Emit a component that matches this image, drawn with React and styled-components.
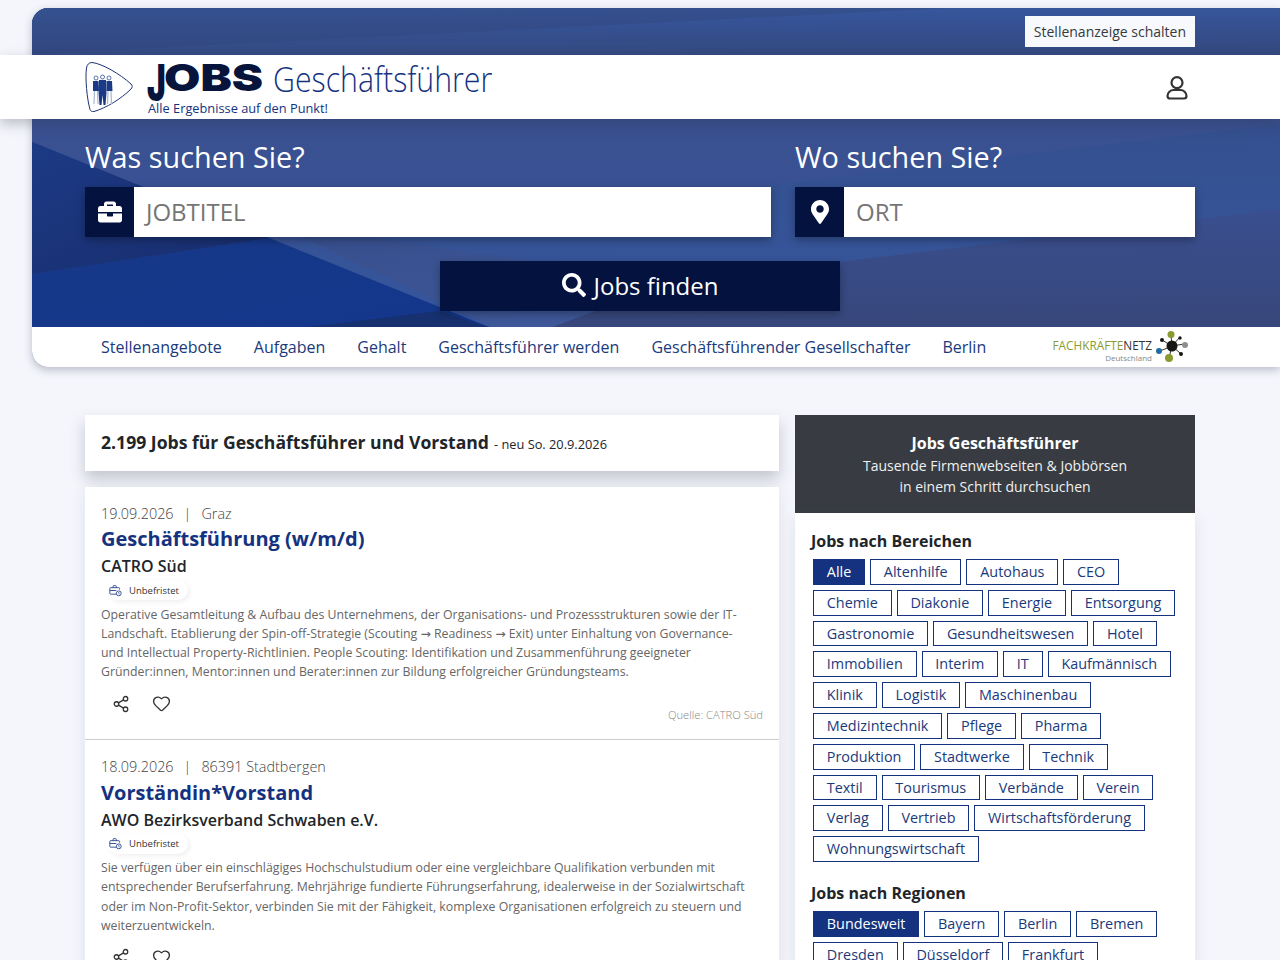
import React from "react";
import styled, { createGlobalStyle } from "styled-components";
import { FaBriefcase, FaMapMarkerAlt, FaSearch } from "react-icons/fa";
import { Share2, Heart } from "lucide-react";

const GlobalStyle = createGlobalStyle`
  html, body {
    margin: 0;
    padding: 0;
    background: #f5f6fc;
    font-family: "Open Sans", "DejaVu Sans", sans-serif;
  }
  * { box-sizing: border-box; }
`;

const Page = styled.div`
  width: 1280px;
  height: 960px;
  overflow: hidden;
  padding-top: 8px;
`;

const Hero = styled.div`
  position: relative;
  margin-left: 32px;
  border-radius: 16px 0 0 16px;
  background: #3a5290;
  box-shadow: 0 3px 8px rgba(30, 40, 70, 0.28);
`;

const HeroArt = styled.svg`
  position: absolute;
  left: 0;
  top: 0;
  width: 1248px;
  height: 319px;
  border-radius: 16px 0 0 0;
`;

const TopBar = styled.div`
  position: relative;
  height: 47px;
  padding: 8px 85px 0 0;
  display: flex;
  justify-content: flex-end;
  align-items: flex-start;
`;

const PostButton = styled.a`
  height: 31px;
  padding: 0 9px;
  background: #f8f9fc;
  color: #343a40;
  font-size: 14px;
  line-height: 31px;
`;

const Header = styled.header`
  position: relative;
  margin-left: -32px;
  height: 64px;
  padding: 0 85px;
  background: #fff;
  box-shadow: 0 5px 12px rgba(40, 45, 60, 0.28);
  display: flex;
  align-items: center;
  justify-content: space-between;
`;

const Brand = styled.div`
  align-self: flex-start;
  padding-top: 1px;
  display: flex;
  align-items: flex-start;
  gap: 14px;
`;

const LogoSvg = styled.svg`
  margin-top: 6px;
`;

const BrandWords = styled.div`
  display: flex;
  flex-direction: column;
  width: 380px;
`;

const BrandLine = styled.div`
  display: flex;
  align-items: baseline;
  height: 46px;
  margin-top: -2px;
`;

const BrandJ = styled.span`
  display: inline-block;
  flex: none;
  width: 17px;
  font-family: "Inter", sans-serif;
  font-weight: 900;
  font-size: 37px;
  line-height: 46px;
  color: #07143c;
  transform: translateY(1px) scale(0.85, 1.33);
  transform-origin: 0 10px;
`;

const BrandJobs = styled.span`
  display: inline-block;
  flex: none;
  width: 109px;
  font-family: "Inter", sans-serif;
  font-weight: 900;
  font-size: 37px;
  line-height: 46px;
  color: #07143c;
  transform: translateY(1px) scaleX(1.27);
  transform-origin: left;
`;

const BrandRole = styled.span`
  display: inline-block;
  flex: none;
  font-family: "Open Sans", sans-serif;
  font-weight: 300;
  font-size: 35px;
  line-height: 46px;
  color: #14327f;
  transform: translateY(2px) scaleX(0.865);
  transform-origin: left;
  white-space: nowrap;
`;

const BrandClaim = styled.div`
  margin-left: 1px;
  font-size: 12.8px;
  line-height: 16px;
  color: #14327f;
`;

const UserIcon = styled.svg`
  width: 24px;
  height: 26px;
  margin: 2px 6px 0 0;
  color: #333;
`;

const Search = styled.section`
  position: relative;
  height: 208px;
  padding: 0 85px 0 53px;
`;

const SearchGrid = styled.div`
  display: grid;
  grid-template-columns: 686px 400px;
  column-gap: 24px;
`;

const SearchLabel = styled.label`
  display: block;
  height: 68px;
  padding-top: 17px;
  color: #fff;
  font-size: 28.8px;
  line-height: 42px;
`;

const SearchField = styled.div`
  display: flex;
  height: 50px;
  background: #fff;
  box-shadow: 0 3px 8px rgba(0, 0, 0, 0.3);
`;

const FieldIcon = styled.div`
  width: 49px;
  background: #04123f;
  color: #fff;
  font-size: 24px;
  display: flex;
  align-items: center;
  justify-content: center;
`;

const FieldText = styled.div`
  padding-left: 12px;
  color: #757575;
  font-size: 24px;
  line-height: 50px;
`;

const FindButton = styled.button`
  display: flex;
  align-items: center;
  justify-content: center;
  gap: 8px;
  width: 400px;
  height: 50px;
  margin: 24px auto 0;
  padding: 0 0 2px;
  border: 0;
  background: #04123f;
  color: #fff;
  font-family: inherit;
  font-size: 24px;
  box-shadow: 0 3px 8px rgba(0, 0, 0, 0.3);
`;

const Nav = styled.nav`
  position: relative;
  height: 40px;
  padding: 0 91px 0 69px;
  background: #fff;
  border-radius: 0 0 0 16px;
  display: flex;
  align-items: center;
  gap: 32px;
`;

const NavLink = styled.a`
  color: #1a3a7c;
  font-size: 16px;
`;

const Partner = styled.div`
  margin-left: auto;
  display: flex;
  align-items: center;
  gap: 3px;
`;

const PartnerWords = styled.div`
  padding-top: 7px;
  display: flex;
  flex-direction: column;
  align-items: flex-end;
  font-size: 11.8px;
  line-height: 13px;
  color: #8a9a2e;
`;

const PartnerDark = styled.span`
  color: #333;
`;

const PartnerSub = styled.span`
  margin-top: 1px;
  font-size: 8px;
  line-height: 9px;
  color: #888;
`;

const Columns = styled.main`
  display: grid;
  grid-template-columns: 694px 400px;
  column-gap: 16px;
  padding: 48px 85px 0;
  align-items: start;
`;

const ResultBar = styled.div`
  height: 56px;
  padding: 0 16px 2px;
  background: #fff;
  box-shadow: 0 8px 14px rgba(50, 55, 80, 0.25);
  display: flex;
  align-items: center;
  gap: 5px;
  margin-bottom: 15.5px;
`;

const ResultTitle = styled.h1`
  margin: 0;
  font-size: 17.6px;
  font-weight: 700;
  color: #212529;
`;

const ResultNote = styled.span`
  font-size: 12.8px;
  color: #212529;
  padding-top: 3px;
`;

const JobList = styled.div`
  background: #fff;
  box-shadow: 0 4px 14px rgba(60, 70, 100, 0.12);
`;

const Job = styled.article`
  position: relative;
  height: 253.5px;
  padding: 16.1px 16px 0;
  border-bottom: 1px solid #ccc;
`;

const JobMeta = styled.div`
  font-size: 14.4px;
  font-weight: 300;
  line-height: 21.7px;
  color: #444;
  display: flex;
  gap: 10px;
`;

const JobTitle = styled.h2`
  margin: 0;
  font-size: 20px;
  font-weight: 700;
  line-height: 30px;
  color: #14327f;
`;

const JobCompany = styled.div`
  font-size: 16px;
  font-weight: 600;
  line-height: 25px;
  color: #212529;
`;

const JobBadge = styled.div`
  display: inline-flex;
  align-items: center;
  gap: 7px;
  height: 20px;
  margin: 1px 0 0 7px;
  padding: 0 9px 0 1px;
  border-radius: 10px;
  font-size: 9.5px;
  color: #333;
  box-shadow: 2px 2px 4px rgba(60, 70, 100, 0.08);
`;

const BadgeIcon = styled.svg`
  width: 13px;
  height: 13px;
  color: #14327f;
`;

const JobText = styled.p`
  margin: 2.9px 0 0;
  padding-right: 10px;
  font-size: 12.3px;
  line-height: 19.2px;
  color: #666;
`;

const JobActions = styled.div`
  display: flex;
  align-items: center;
  gap: 22px;
  margin: 12.6px 0 0 11px;
  color: #333;
`;

const JobSource = styled.div`
  position: absolute;
  right: 16px;
  bottom: 17px;
  font-size: 11.2px;
  font-weight: 300;
  color: #888;
`;

const SideHead = styled.div`
  height: 98px;
  padding-top: 17px;
  background: #383c42;
  color: #f0f0f0;
  text-align: center;
  font-size: 14px;
  line-height: 21px;
`;

const SideTitle = styled.div`
  font-size: 16px;
  font-weight: 700;
  line-height: 23px;
  color: #fff;
`;

const SidePanel = styled.aside`
  padding: 16px 16px 0;
  background: #fff;
  box-shadow: 0 4px 14px rgba(60, 70, 100, 0.12);
`;

const SideGroup = styled.div`
  margin-bottom: 19px;
`;

const SideHeading = styled.h3`
  margin: 0 0 6px;
  font-size: 16px;
  font-weight: 700;
  line-height: 24px;
  color: #212529;
`;

const TagList = styled.div`
  display: flex;
  flex-wrap: wrap;
  gap: 5px;
  padding: 0 3px 0 2px;
`;

const Tag = styled.a`
  height: 25.8px;
  padding: 0 12.8px;
  border: 1px solid #14327f;
  background: ${(p) => (p.$active ? "#14327f" : "#fff")};
  color: ${(p) => (p.$active ? "#fff" : "#1a3a7c")};
  font-size: 14.4px;
  line-height: 24px;
`;

const areas = [
  "Alle", "Altenhilfe", "Autohaus", "CEO", "Chemie", "Diakonie", "Energie", "Entsorgung",
  "Gastronomie", "Gesundheitswesen", "Hotel", "Immobilien", "Interim", "IT", "Kaufmännisch",
  "Klinik", "Logistik", "Maschinenbau", "Medizintechnik", "Pflege", "Pharma", "Produktion",
  "Stadtwerke", "Technik", "Textil", "Tourismus", "Verbände", "Verein", "Verlag", "Vertrieb",
  "Wirtschaftsförderung", "Wohnungswirtschaft",
];

const regions = ["Bundesweit", "Bayern", "Berlin", "Bremen", "Dresden", "Düsseldorf", "Frankfurt"];

const navItems = [
  "Stellenangebote", "Aufgaben", "Gehalt", "Geschäftsführer werden",
  "Geschäftsführender Gesellschafter", "Berlin",
];

const jobs = [
  {
    date: "19.09.2026",
    place: "Graz",
    title: "Geschäftsführung (w/m/d)",
    company: "CATRO Süd",
    text: "Operative Gesamtleitung & Aufbau des Unternehmens, der Organisations- und Prozessstrukturen sowie der IT-Landschaft. Etablierung der Spin-off-Strategie (Scouting → Readiness → Exit) unter Einhaltung von Governance- und Intellectual Property-Richtlinien. People Scouting: Identifikation und Zusammenführung geeigneter Gründer:innen, Mentor:innen und Berater:innen zur Bildung erfolgreicher Gründungsteams.",
  },
  {
    date: "18.09.2026",
    place: "86391 Stadtbergen",
    title: "Vorständin*Vorstand",
    company: "AWO Bezirksverband Schwaben e.V.",
    text: "Sie verfügen über ein einschlägiges Hochschulstudium oder eine vergleichbare Qualifikation verbunden mit entsprechender Berufserfahrung. Mehrjährige fundierte Führungserfahrung, idealerweise in der Sozialwirtschaft oder im Non-Profit-Sektor, verbinden Sie mit der Fähigkeit, komplexe Organisationen erfolgreich zu steuern und weiterzuentwickeln.",
  },
];

const LogoMark = () => (
  <LogoSvg width="48" height="50" viewBox="0 0 48 50" fill="none">
    <path d="M7 .5C17 1.500 35 12 46 22c1.500 1.500 1.500 3.500 0 5C36 37 21 46 9 49.500c-2 .5-3.500-.5-4-2C2 37 0 16 1.500 6 2 2.500 4 .5 7 .5z" stroke="#1d3272" strokeWidth="1" />
    <g fill="#1d3a86">
      <circle cx="11" cy="16" r="2" fill="#fff" stroke="#1d3a86" strokeWidth=".7" />
      <circle cx="17.500" cy="15" r="2" fill="#fff" stroke="#1d3a86" strokeWidth=".7" />
      <circle cx="24" cy="16" r="2" fill="#fff" stroke="#1d3a86" strokeWidth=".7" />
      <path d="M8 19h5.500l.5 10H8z" />
      <path d="M21.500 19H27l.5 10h-6z" />
      <path d="M14 18h7l.5 13-1 12h-2l-1-10-1 10h-2l-1-12z" />
    </g>
    <path d="M9.500 29l-.5 13M12.500 29l.5 13M23 29l-.5 13M26 29l.5 13" stroke="#a8b6d0" strokeWidth="1.200" />
  </LogoSvg>
);

const PartnerMark = () => (
  <svg width="34" height="34" viewBox="0 0 34 34">
    <g stroke="#333" strokeWidth="1">
      <path d="M17 16L16 5M17 16L7 10M17 16L5 21M17 16L14 28M17 16L29 14M17 16L25 23M17 16L25 7" />
    </g>
    <circle cx="17" cy="16" r="5.500" fill="#151515" />
    <circle cx="16" cy="4.500" r="3.500" fill="#8a9a2e" />
    <circle cx="14" cy="28" r="4" fill="#8a9a2e" />
    <circle cx="4" cy="21" r="3" fill="#1f6ca3" />
    <circle cx="30" cy="15" r="3" fill="#8e8e8e" />
    <circle cx="7" cy="10" r="2" fill="#151515" />
    <circle cx="25" cy="8" r="1.700" fill="#151515" />
    <circle cx="26" cy="24" r="2" fill="#151515" />
  </svg>
);

const BagClock = () => (
  <BadgeIcon viewBox="0 0 16 16" fill="none" stroke="currentColor" strokeWidth="1">
    <path d="M9 12.500H2a1 1 0 0 1-1-1v-6a1 1 0 0 1 1-1h10a1 1 0 0 1 1 1V7" />
    <path d="M5 4.500V3a1 1 0 0 1 1-1h2a1 1 0 0 1 1 1v1.500M1 8h8" />
    <circle cx="12" cy="11.500" r="3" />
    <path d="M12 10v1.500l1 .7" />
  </BadgeIcon>
);

// the faceted blue backdrop behind the top bar and the search
const HeroFacets = () => (
  <HeroArt viewBox="0 0 1248 319" aria-hidden="true">
    <defs>
      <linearGradient id="barUpper" x1="0" y1="0" x2="0.1" y2="1">
        <stop offset="0" stopColor="#34518f" />
        <stop offset="1" stopColor="#334781" />
      </linearGradient>
      <linearGradient id="barLower" x1="0.45" y1="0.1" x2="0.6" y2="1">
        <stop offset="0" stopColor="#36559b" />
        <stop offset="1" stopColor="#344980" />
      </linearGradient>
      <linearGradient id="upperFacet" x1="0.5" y1="0" x2="0.5" y2="1">
        <stop offset="0" stopColor="#3a5090" />
        <stop offset="1" stopColor="#375399" />
      </linearGradient>
      <linearGradient id="midFacet" x1="0.55" y1="0.1" x2="0.65" y2="1">
        <stop offset="0" stopColor="#34508f" />
        <stop offset="1" stopColor="#37569e" />
      </linearGradient>
      <linearGradient id="lowFacet" x1="0.5" y1="0" x2="0.55" y2="1">
        <stop offset="0" stopColor="#3a4f90" />
        <stop offset="1" stopColor="#37477b" />
      </linearGradient>
      <linearGradient id="wedgeLight" x1="0.2" y1="0" x2="0.75" y2="1">
        <stop offset="0" stopColor="#374e8c" />
        <stop offset="1" stopColor="#3f5899" />
      </linearGradient>
      <linearGradient id="triUpper" x1="0" y1="0" x2="0.8" y2="0.9">
        <stop offset="0" stopColor="#1c3a85" />
        <stop offset="1" stopColor="#192f70" />
      </linearGradient>
      <linearGradient id="triLower" x1="0" y1="0" x2="0.6" y2="1">
        <stop offset="0" stopColor="#1a3983" />
        <stop offset="1" stopColor="#14378c" />
      </linearGradient>
    </defs>
    <rect width="1248" height="47" fill="url(#barLower)" />
    <polygon points="0,0 918,0 0,46" fill="url(#barUpper)" />
    <rect y="111" width="1248" height="208" fill="url(#upperFacet)" />
    <polygon points="1248,116 763,174 250,236 450,319 1248,319" fill="url(#midFacet)" />
    <polygon points="1248,201 814,253 640,274 520,319 1248,319" fill="url(#lowFacet)" />
    <polygon points="240,215 640,274 520,319 460,319" fill="url(#wedgeLight)" />
    <polygon points="0,134 457,319 0,319" fill="url(#triLower)" />
    <polygon points="0,134 237,230 0,266" fill="url(#triUpper)" />
    <polygon points="277,319 407,303 457,319" fill="#17306f" />
  </HeroArt>
);

const App = () => (
  <Page>
    <GlobalStyle />
    <Hero>
      <HeroFacets />
      <TopBar>
        <PostButton>Stellenanzeige schalten</PostButton>
      </TopBar>
      <Header>
        <Brand>
          <LogoMark />
          <BrandWords>
            <BrandLine>
              <BrandJ>J</BrandJ>
              <BrandJobs>OBS</BrandJobs>
              <BrandRole>Geschäftsführer</BrandRole>
            </BrandLine>
            <BrandClaim>Alle Ergebnisse auf den Punkt!</BrandClaim>
          </BrandWords>
        </Brand>
        <UserIcon viewBox="0 0 24 26" fill="none" stroke="currentColor" strokeWidth="2.200">
          <circle cx="12" cy="7.700" r="5.500" />
          <path d="M2.500 21c0-3.500 3-6 6-6h7c3 0 6 2.500 6 6 0 1.600-1 2.500-2.500 2.500H5c-1.500 0-2.500-.9-2.500-2.500z" />
        </UserIcon>
      </Header>
      <Search>
        <SearchGrid>
          <div>
            <SearchLabel>Was suchen Sie?</SearchLabel>
            <SearchField>
              <FieldIcon><FaBriefcase /></FieldIcon>
              <FieldText>JOBTITEL</FieldText>
            </SearchField>
          </div>
          <div>
            <SearchLabel>Wo suchen Sie?</SearchLabel>
            <SearchField>
              <FieldIcon><FaMapMarkerAlt /></FieldIcon>
              <FieldText>ORT</FieldText>
            </SearchField>
          </div>
        </SearchGrid>
        <FindButton>
          <FaSearch />
          Jobs finden
        </FindButton>
      </Search>
      <Nav>
        {navItems.map((item) => (
          <NavLink key={item}>{item}</NavLink>
        ))}
        <Partner>
          <PartnerWords>
            <span>FACHKRÄFTE<PartnerDark>NETZ</PartnerDark></span>
            <PartnerSub>Deutschland</PartnerSub>
          </PartnerWords>
          <PartnerMark />
        </Partner>
      </Nav>
    </Hero>
    <Columns>
      <div>
        <ResultBar>
          <ResultTitle>2.199 Jobs für Geschäftsführer und Vorstand</ResultTitle>
          <ResultNote>- neu So. 20.9.2026</ResultNote>
        </ResultBar>
        <JobList>
          {jobs.map((job) => (
            <Job key={job.title}>
              <JobMeta>
                <span>{job.date}</span>
                <span>|</span>
                <span>{job.place}</span>
              </JobMeta>
              <JobTitle>{job.title}</JobTitle>
              <JobCompany>{job.company}</JobCompany>
              <JobBadge>
                <BagClock />
                Unbefristet
              </JobBadge>
              <JobText>{job.text}</JobText>
              <JobActions>
                <Share2 size={18} strokeWidth={1.7} />
                <Heart size={19} strokeWidth={1.7} />
              </JobActions>
              <JobSource>Quelle: {job.company}</JobSource>
            </Job>
          ))}
        </JobList>
      </div>
      <div>
        <SideHead>
          <SideTitle>Jobs Geschäftsführer</SideTitle>
          Tausende Firmenwebseiten &amp; Jobbörsen
          <br />
          in einem Schritt durchsuchen
        </SideHead>
        <SidePanel>
          <SideGroup>
            <SideHeading>Jobs nach Bereichen</SideHeading>
            <TagList>
              {areas.map((tag) => (
                <Tag key={tag} $active={tag === "Alle"}>{tag}</Tag>
              ))}
            </TagList>
          </SideGroup>
          <SideGroup>
            <SideHeading>Jobs nach Regionen</SideHeading>
            <TagList>
              {regions.map((tag) => (
                <Tag key={tag} $active={tag === "Bundesweit"}>{tag}</Tag>
              ))}
            </TagList>
          </SideGroup>
        </SidePanel>
      </div>
    </Columns>
  </Page>
);

export default App;
